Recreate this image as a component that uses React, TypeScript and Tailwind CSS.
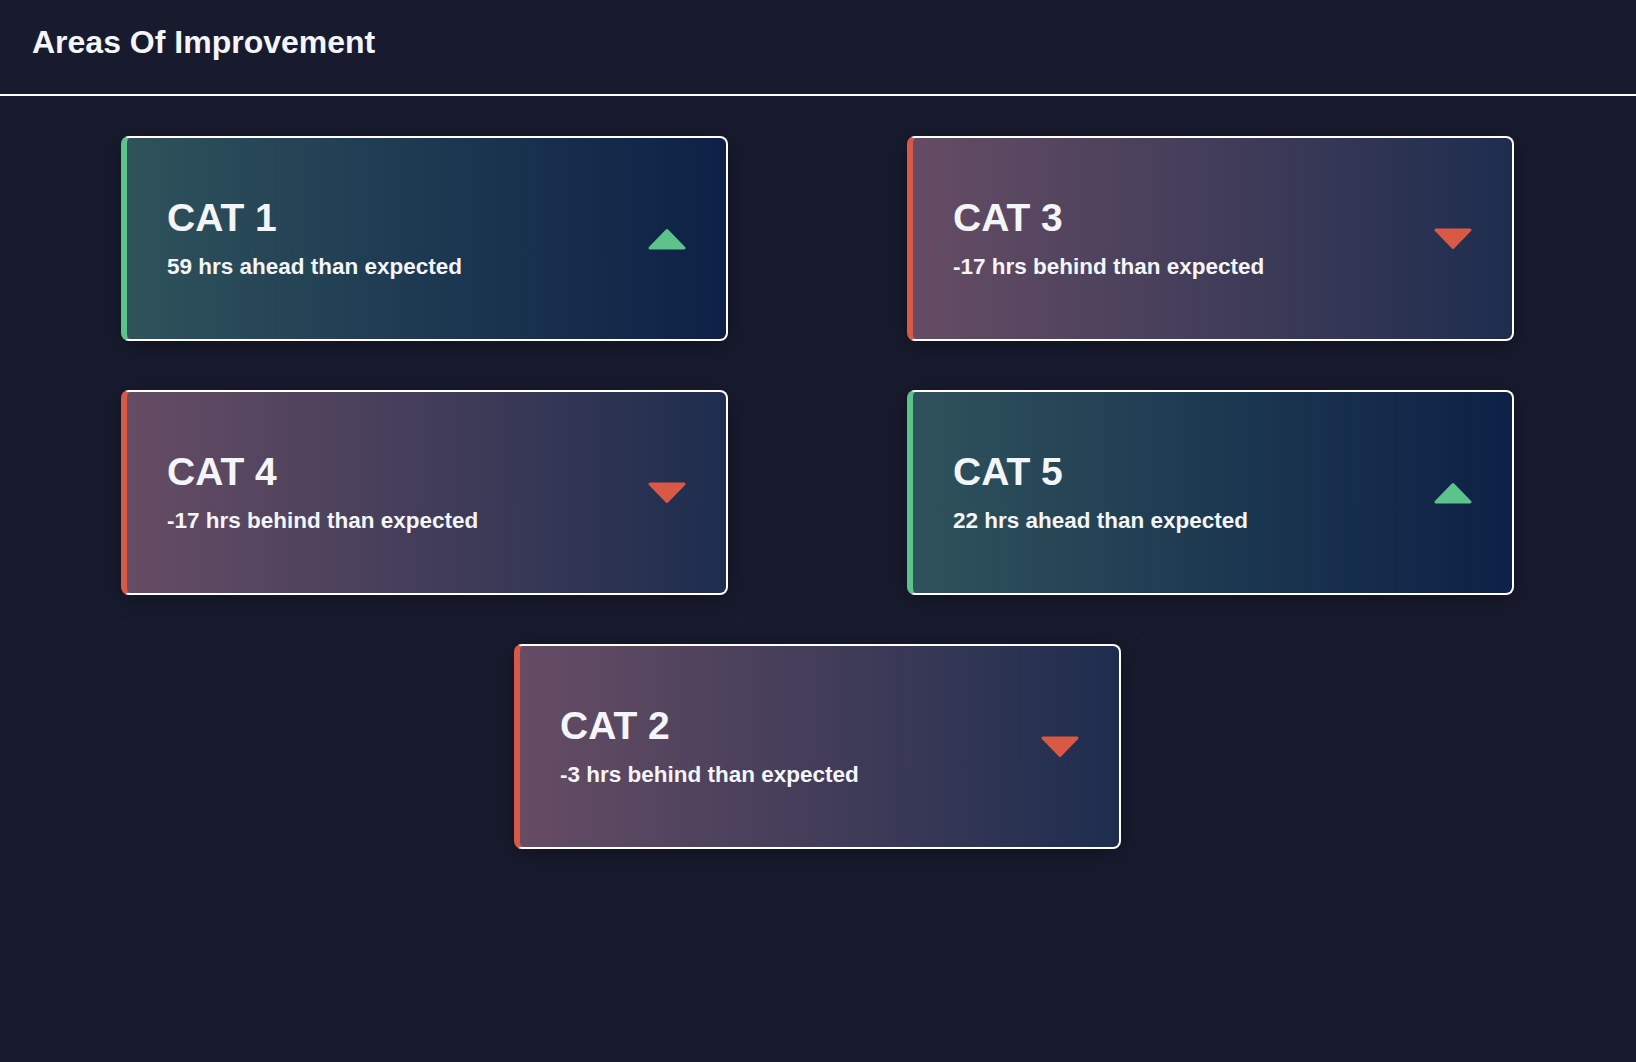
import React from "react";

type Area = {
  name: string;
  hours: number;
};

const areas: Area[] = [
  { name: "CAT 1", hours: 59 },
  { name: "CAT 3", hours: -17 },
  { name: "CAT 4", hours: -17 },
  { name: "CAT 5", hours: 22 },
  { name: "CAT 2", hours: -3 },
];

function Arrow({ up }: { up: boolean }) {
  // rounded triangle, same size for both directions
  return (
    <svg width="38" height="22" viewBox="0 0 38 22" className="shrink-0">
      {up ? (
        <polygon
          points="2,20 19,2.5 36,20"
          fill="#5cc48b"
          stroke="#5cc48b"
          strokeWidth="3"
          strokeLinejoin="round"
        />
      ) : (
        <polygon
          points="2,2 36,2 19,19.5"
          fill="#d85a46"
          stroke="#d85a46"
          strokeWidth="3"
          strokeLinejoin="round"
        />
      )}
    </svg>
  );
}

function AreaCard({ area }: { area: Area }) {
  const ahead = area.hours >= 0;
  const label = ahead
    ? `${area.hours} hrs ahead than expected`
    : `${area.hours} hrs behind than expected`;

  return (
    <div
      className={`w-[607px] h-[205px] flex items-center justify-between pl-10 pr-10 rounded-lg border-2 border-white border-l-[6px] shadow-[0_4px_22px_rgba(0,0,0,0.35)] ${
        ahead
          ? "border-l-[#5cc48b] bg-gradient-to-r from-[#2f525b] to-[#0e2046]"
          : "border-l-[#d85a46] bg-gradient-to-r from-[#664c64] to-[#1e2d4e]"
      }`}
    >
      <div className="flex flex-col">
        <h3 className="text-[39px] leading-none font-bold text-[#f4f5f9]">{area.name}</h3>
        <p className="mt-[19px] text-[22.5px] leading-none font-bold text-[#f4f5f9]">{label}</p>
      </div>
      <Arrow up={ahead} />
    </div>
  );
}

export default function App() {
  return (
    <div className="min-h-screen bg-[#181b2e] font-['Liberation_Sans',Arial,sans-serif] text-white">
      {/* Header */}
      <div className="h-[96px] px-8 pt-[23px] border-b-2 border-white">
        <h1 className="text-[32px] leading-[1.2] font-bold text-[#f4f5f9]">Areas Of Improvement</h1>
      </div>

      {/* Cards */}
      <div className="pt-10 pb-10 pl-[121px]">
        <div className="w-[1393px] flex flex-wrap justify-center gap-x-[179px] gap-y-[49px]">
          {areas.map((a) => (
            <AreaCard key={a.name} area={a} />
          ))}
        </div>
      </div>
    </div>
  );
}
